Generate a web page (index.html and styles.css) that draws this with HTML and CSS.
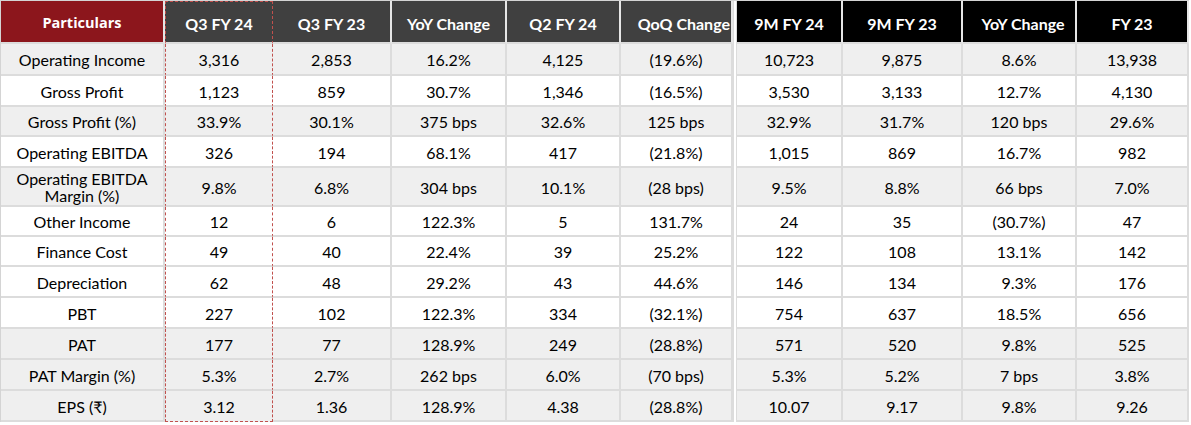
FILE: index.html
```html
<!DOCTYPE html>
<html lang="en">
<head>
<meta charset="utf-8">
<title>Financial Highlights</title>
<link rel="stylesheet" href="styles.css">
</head>
<body>
<div class="table">
  <div class="row head">
    <div class="c part">Particulars</div>
    <div class="c hl dk">Q3 FY 24</div>
    <div class="c dk">Q3 FY 23</div>
    <div class="c dk">YoY Change</div>
    <div class="c dk">Q2 FY 24</div>
    <div class="c dk qoq">QoQ Change</div>
    <div class="gap"></div>
    <div class="c bk">9M FY 24</div>
    <div class="c bk">9M FY 23</div>
    <div class="c bk yoy2">YoY Change</div>
    <div class="c bk">FY 23</div>
  </div>
  <div class="row grey h32">
    <div class="c">Operating Income</div><div class="c hl">3,316</div><div class="c">2,853</div><div class="c">16.2%</div><div class="c">4,125</div><div class="c">(19.6%)</div><div class="gap"></div><div class="c">10,723</div><div class="c">9,875</div><div class="c">8.6%</div><div class="c">13,938</div>
  </div>
  <div class="row">
    <div class="c">Gross Profit</div><div class="c hl">1,123</div><div class="c">859</div><div class="c">30.7%</div><div class="c">1,346</div><div class="c">(16.5%)</div><div class="gap"></div><div class="c">3,530</div><div class="c">3,133</div><div class="c">12.7%</div><div class="c">4,130</div>
  </div>
  <div class="row grey h30">
    <div class="c">Gross Profit (%)</div><div class="c hl">33.9%</div><div class="c">30.1%</div><div class="c">375 bps</div><div class="c">32.6%</div><div class="c">125 bps</div><div class="gap"></div><div class="c">32.9%</div><div class="c">31.7%</div><div class="c">120 bps</div><div class="c">29.6%</div>
  </div>
  <div class="row">
    <div class="c">Operating EBITDA</div><div class="c hl">326</div><div class="c">194</div><div class="c">68.1%</div><div class="c">417</div><div class="c">(21.8%)</div><div class="gap"></div><div class="c">1,015</div><div class="c">869</div><div class="c">16.7%</div><div class="c">982</div>
  </div>
  <div class="row grey tall">
    <div class="c">Operating EBITDA<br>Margin (%)</div><div class="c hl">9.8%</div><div class="c">6.8%</div><div class="c">304 bps</div><div class="c">10.1%</div><div class="c">(28 bps)</div><div class="gap"></div><div class="c">9.5%</div><div class="c">8.8%</div><div class="c">66 bps</div><div class="c">7.0%</div>
  </div>
  <div class="row h30">
    <div class="c">Other Income</div><div class="c hl">12</div><div class="c">6</div><div class="c">122.3%</div><div class="c">5</div><div class="c">131.7%</div><div class="gap"></div><div class="c">24</div><div class="c">35</div><div class="c">(30.7%)</div><div class="c">47</div>
  </div>
  <div class="row h30">
    <div class="c">Finance Cost</div><div class="c hl">49</div><div class="c">40</div><div class="c">22.4%</div><div class="c">39</div><div class="c">25.2%</div><div class="gap"></div><div class="c">122</div><div class="c">108</div><div class="c">13.1%</div><div class="c">142</div>
  </div>
  <div class="row">
    <div class="c">Depreciation</div><div class="c hl">62</div><div class="c">48</div><div class="c">29.2%</div><div class="c">43</div><div class="c">44.6%</div><div class="gap"></div><div class="c">146</div><div class="c">134</div><div class="c">9.3%</div><div class="c">176</div>
  </div>
  <div class="row">
    <div class="c">PBT</div><div class="c hl">227</div><div class="c">102</div><div class="c">122.3%</div><div class="c">334</div><div class="c">(32.1%)</div><div class="gap"></div><div class="c">754</div><div class="c">637</div><div class="c">18.5%</div><div class="c">656</div>
  </div>
  <div class="row grey">
    <div class="c">PAT</div><div class="c hl">177</div><div class="c">77</div><div class="c">128.9%</div><div class="c">249</div><div class="c">(28.8%)</div><div class="gap"></div><div class="c">571</div><div class="c">520</div><div class="c">9.8%</div><div class="c">525</div>
  </div>
  <div class="row grey">
    <div class="c">PAT Margin (%)</div><div class="c hl">5.3%</div><div class="c">2.7%</div><div class="c">262 bps</div><div class="c">6.0%</div><div class="c">(70 bps)</div><div class="gap"></div><div class="c">5.3%</div><div class="c">5.2%</div><div class="c">7 bps</div><div class="c">3.8%</div>
  </div>
  <div class="row grey last">
    <div class="c">EPS (₹)</div><div class="c hl">3.12</div><div class="c">1.36</div><div class="c">128.9%</div><div class="c">4.38</div><div class="c">(28.8%)</div><div class="gap"></div><div class="c">10.07</div><div class="c">9.17</div><div class="c">9.8%</div><div class="c">9.26</div>
  </div>
</div>
</body>
</html>
```
FILE: styles.css
```css
* { box-sizing: border-box; }
html, body { margin: 0; padding: 0; background: #ffffff; }
body {
  font-family: Lato, "Liberation Sans", "DejaVu Sans", sans-serif;
  font-size: 16px;
  color: #000000;
}
.table {
  width: 1189px;
  border-left: 1px solid #d4d4d4;
  border-top: 1px solid #d4d4d4;
}
.row {
  display: grid;
  grid-template-columns: 164px 108px 119px 115px 114px 112px 4px 106px 120px 114px 112px;
  height: 31px;
  background: #ffffff;
}
.row.grey { background: #efefef; }
.row.h32 { height: 32px; }
.row.h30 { height: 30px; }
.row.tall { height: 39px; }
.row.head { height: 43px; }
.c {
  display: flex;
  align-items: center;
  justify-content: center;
  text-align: center;
  line-height: 18px;
  padding-top: 2px;
  border-right: 2px solid #dcdcdc;
  border-bottom: 2px solid #dcdcdc;
  white-space: nowrap;
}
.tall .c { line-height: 17px; padding-top: 1px; }
.gap {
  background: #ffffff;
  border-left: 1px solid #dcdcdc;
  border-right: 1px solid #dcdcdc;
}
.c.hl {
  border-left: 1px dashed #c0504d;
  border-right: 1px dashed #c0504d;
}
.head .c {
  color: #ffffff;
  font-weight: 700;
  font-size: 16px;
  padding-top: 4px;
  border-right-color: #e6e6e6;
}
.head .c.hl { border-top: 1px dashed #c0504d; border-right-color: #c0504d; }
.last .c.hl { border-bottom: 1px dashed #c0504d; }
.head .part {
  background: #8c161c;
  font-family: "Open Sans", "Liberation Sans", sans-serif;
  font-size: 14.5px;
  padding-top: 2px;
}
.head .dk { background: #404040; }
.head .bk { background: #000000; }
.head .qoq { justify-content: flex-end; padding-right: 1px; }
.head .yoy2 { padding-left: 8px; }
```
